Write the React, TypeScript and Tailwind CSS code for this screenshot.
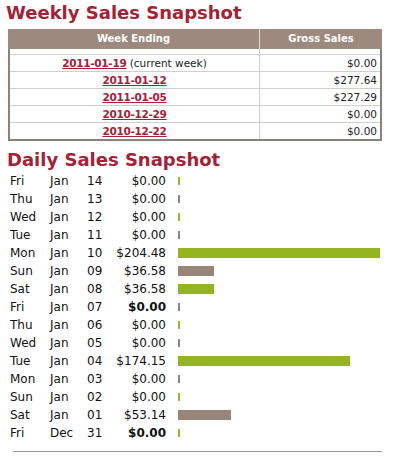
import React from 'react';

const weeks = [
    { date: '2011-01-19', note: ' (current week)', amount: '$0.00' },
    { date: '2011-01-12', note: '', amount: '$277.64' },
    { date: '2011-01-05', note: '', amount: '$227.29' },
    { date: '2010-12-29', note: '', amount: '$0.00' },
    { date: '2010-12-22', note: '', amount: '$0.00' },
];

const days = [
    { d: 'Fri', m: 'Jan', n: '14', v: 0 },
    { d: 'Thu', m: 'Jan', n: '13', v: 0 },
    { d: 'Wed', m: 'Jan', n: '12', v: 0 },
    { d: 'Tue', m: 'Jan', n: '11', v: 0 },
    { d: 'Mon', m: 'Jan', n: '10', v: 204.48 },
    { d: 'Sun', m: 'Jan', n: '09', v: 36.58 },
    { d: 'Sat', m: 'Jan', n: '08', v: 36.58 },
    { d: 'Fri', m: 'Jan', n: '07', v: 0, bold: true },
    { d: 'Thu', m: 'Jan', n: '06', v: 0 },
    { d: 'Wed', m: 'Jan', n: '05', v: 0 },
    { d: 'Tue', m: 'Jan', n: '04', v: 174.15 },
    { d: 'Mon', m: 'Jan', n: '03', v: 0 },
    { d: 'Sun', m: 'Jan', n: '02', v: 0 },
    { d: 'Sat', m: 'Jan', n: '01', v: 53.14 },
    { d: 'Fri', m: 'Dec', n: '31', v: 0, bold: true },
];

export default function App() {
    return (
        <div className="w-[405px] h-[457px] bg-white text-black font-['DejaVu_Sans',Verdana,sans-serif] overflow-hidden">
            {/* Weekly */}
            <h1 className="h-[29px] pl-[6px] pt-[1px] text-[18px] leading-[24px] font-bold text-[#a42236]">Weekly Sales Snapshot</h1>
            <div className="ml-[8px] w-[374px]">
                <div className="grid grid-cols-[252px_1fr] h-[20px] bg-[#9d897d] text-white text-[10px] font-bold leading-[20px]">
                    <div className="text-center border-r border-white/70">Week Ending</div>
                    <div className="text-center">Gross Sales</div>
                </div>
                <div className="border-2 border-t-0 border-[#8f7f77]">
                    <div className="grid grid-cols-[250px_1fr] h-[5px]">
                        <div className="border-r border-[#c8c8c8]"></div>
                        <div></div>
                    </div>
                    {weeks.map((w, i) => (
                        <div key={i} className="grid grid-cols-[250px_1fr] h-[17px] border-t border-[#cfcfcf] text-[10.5px] leading-[16px]">
                            <div className="text-center border-r border-[#cfcfcf]">
                                <a className="font-bold text-[#a42236] underline tracking-[-0.3px]">{w.date}</a>
                                <span className="text-[#222]">{w.note}</span>
                            </div>
                            <div className="text-right pr-[3px] text-[#222]">{w.amount}</div>
                        </div>
                    ))}
                </div>
            </div>

            {/* Daily */}
            <h2 className="mt-[7px] h-[24px] pl-[7px] text-[18px] leading-[24px] font-bold text-[#a42236]">Daily Sales Snapshot</h2>
            <div className="text-[12px] text-[#111]">
                {days.map((r, i) => (
                    <div key={i} className="flex items-center h-[18px] pl-[10px]">
                        <span className="w-[40px]">{r.d}</span>
                        <span className="w-[37px]">{r.m}</span>
                        <span className="w-[22px]">{r.n}</span>
                        <span className={`w-[57px] text-right ${r.bold ? 'font-bold' : ''}`}>${r.v.toFixed(2)}</span>
                        <span className="ml-[12px] flex items-center">
                            {r.v > 0 ? (
                                <span
                                    className={`block h-[10px] ${i % 2 === 0 ? 'bg-[#94b51f]' : 'bg-[#998479]'}`}
                                    style={{ width: Math.round(r.v * 0.99) }}
                                ></span>
                            ) : (
                                <span className={`block h-[8px] w-[2px] ${i % 2 === 0 ? 'bg-[#9ab52e]' : 'bg-[#8a8484]'}`}></span>
                            )}
                        </span>
                    </div>
                ))}
            </div>
            <div className="mt-[9px] ml-[13px] w-[369px] border-t border-[#999]"></div>
        </div>
    );
}
